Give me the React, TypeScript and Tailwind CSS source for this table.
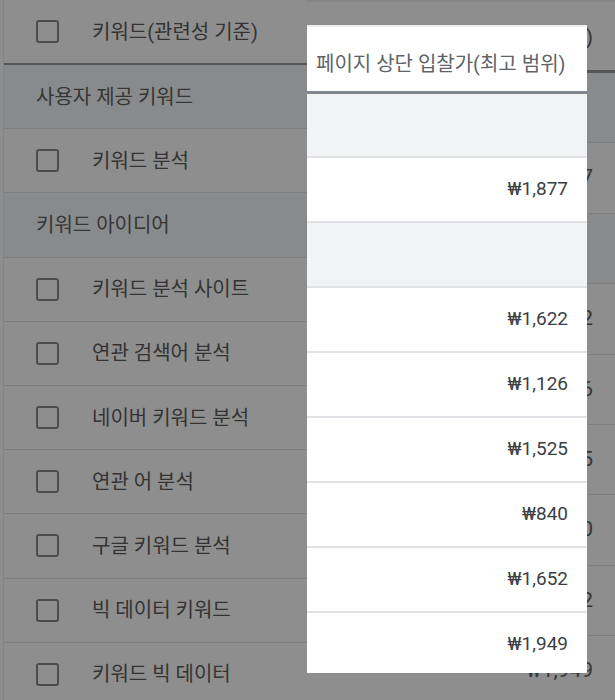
type Row = { kind: "group" | "item"; label: string; bid?: string };

const rows: Row[] = [
  { kind: "group", label: "사용자 제공 키워드" },
  { kind: "item", label: "키워드 분석", bid: "₩1,877" },
  { kind: "group", label: "키워드 아이디어" },
  { kind: "item", label: "키워드 분석 사이트", bid: "₩1,622" },
  { kind: "item", label: "연관 검색어 분석", bid: "₩1,126" },
  { kind: "item", label: "네이버 키워드 분석", bid: "₩1,525" },
  { kind: "item", label: "연관 어 분석", bid: "₩840" },
  { kind: "item", label: "구글 키워드 분석", bid: "₩1,652" },
  { kind: "item", label: "빅 데이터 키워드", bid: "₩1,949" },
  { kind: "item", label: "키워드 빅 데이터", bid: "₩2,010" },
];

function Checkbox() {
  return <span className="block w-[23px] h-[23px] shrink-0 rounded-[3px] border-[2.5px] border-[#4d4d4d]" />;
}

export default function App() {
  return (
    <div className="relative flex w-[615px] h-[700px] overflow-hidden bg-[#8e8e8e] font-['Roboto','Noto_Sans_CJK_KR',sans-serif]">
      {/* dimmed keyword column */}
      <div className="w-[307px] shrink-0 pl-[3px]">
        <div className="h-full border-l border-[#838383]">
          <div className="flex items-center h-[65px] border-b-2 border-[#545658] pl-[32px] gap-[33px]">
            <Checkbox />
            <span className="text-[20px] text-[#333333]">키워드(관련성 기준)</span>
          </div>
          {rows.map((r, i) =>
            r.kind === "group" ? (
              <div key={i} className="flex items-center h-[64.2px] border-b border-[#7e7e7e] bg-[#898a8b] pl-[32px]">
                <span className="text-[20px] text-[#363636]">{r.label}</span>
              </div>
            ) : (
              <div key={i} className="flex items-center h-[64.2px] border-b border-[#7e7e7e] pl-[32px] gap-[33px]">
                <Checkbox />
                <span className="text-[20px] text-[#333333]">{r.label}</span>
              </div>
            )
          )}
        </div>
      </div>

      {/* dimmed bid column (larger scale) */}
      <div className="flex-1 border-t-2 border-[#858585]">
        <div className="flex items-center justify-end h-[71px] border-b-[3px] border-[#545658] pr-[22px] pt-[4px]">
          <span className="text-[21px] text-[#363636] whitespace-nowrap">(최고 범위)</span>
        </div>
        {rows.slice(0, 9).map((r, i) => (
          <div
            key={i}
            className={`flex items-center justify-end h-[70.4px] border-b border-[#7e7e7e] pr-[22px] ${r.kind === "group" ? "bg-[#898a8b]" : ""}`}
          >
            {r.bid && <span className="text-[21px] text-[#363636]">{r.bid}</span>}
          </div>
        ))}
      </div>

      {/* highlighted column */}
      <div className="absolute left-[307px] top-[25px] w-[280px] h-[648px] overflow-hidden bg-white">
        <div className="flex items-center h-[69px] border-t-2 border-[#eceef0] border-b-[3px] border-b-[#80868b] pl-[9px] pt-[10px]">
          <span className="text-[20px] text-[#5f6368] whitespace-nowrap">페이지 상단 입찰가(최고 범위)</span>
        </div>
        {rows.map((r, i) => (
          <div
            key={i}
            className={`flex items-center justify-end border-b-2 border-[#e0e2e5] pr-[19px] ${i === 0 ? "h-[64px]" : "h-[65px]"} ${r.kind === "group" ? "bg-[#f1f3f4]" : ""}`}
          >
            {r.bid && <span className="text-[19px] text-[#3c4043]">{r.bid}</span>}
          </div>
        ))}
      </div>
    </div>
  );
}
